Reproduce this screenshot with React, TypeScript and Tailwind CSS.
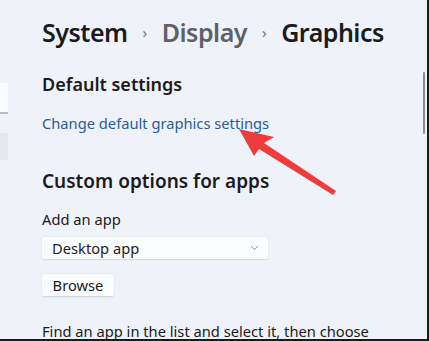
import React from "react";

export default function App() {
  const font = { fontFamily: '"Noto Sans", "Open Sans", sans-serif' };
  return (
    <div
      className="relative w-[429px] h-[341px] overflow-hidden bg-[#eff3f9] border-r-2 border-b-2 border-[#1a1a1a] flex"
      style={font}
    >
      {/* left sidebar sliver */}
      <div className="w-[10px] shrink-0 flex flex-col pt-[83px]">
        <div className="h-[31px] w-[8px] bg-[#f9fbfe] border-b-2 border-[#b9bcc2]" />
        <div className="h-[27px] w-[8px] bg-[#e5e8ee] mt-[19px]" />
      </div>

      {/* content */}
      <div className="flex flex-col pl-[32px] pt-[14px]">
        <div className="flex items-center text-[25px] font-semibold leading-[36px] tracking-[-0.5px]">
          <span className="text-[#1b1b1b]">System</span>
          <span className="text-[#6b6f75] text-[15px] font-normal mx-[15px]">›</span>
          <span className="text-[#5e6167]">Display</span>
          <span className="text-[#6b6f75] text-[15px] font-normal mx-[15px]">›</span>
          <span className="text-[#1b1b1b]">Graphics</span>
        </div>

        <div className="mt-[22px] text-[18px] font-semibold leading-[24px] text-[#1b1b1b]">
          Default settings
        </div>

        <div className="mt-[17px] text-[14.7px] leading-[20px] text-[#2a5d93]">
          Change default graphics settings
        </div>

        <div className="mt-[34px] text-[19px] font-semibold leading-[28px] text-[#1b1b1b]">
          Custom options for apps
        </div>

        <div className="mt-[14px] text-[14.7px] leading-[20px] text-[#1b1b1b]">Add an app</div>

        <div className="mt-[8px] w-[226px] h-[29px] bg-[#fbfcfe] rounded-[3px] border-b border-[#d7dae0] shadow-[0_0_0_1px_#e8ebf0] flex items-center justify-between pl-[10px] pr-[9px]">
          <span className="text-[14.7px] text-[#1b1b1b]">Desktop app</span>
          <svg width="9" height="6" viewBox="0 0 9 6" fill="none">
            <path d="M1 1.2 L4.5 4.6 L8 1.2" stroke="#8a8d93" strokeWidth="1" />
          </svg>
        </div>

        <div className="mt-[14px] w-[72px] h-[28px] bg-[#fbfcfe] rounded-[3px] border-b border-[#d7dae0] shadow-[0_0_0_1px_#e8ebf0] flex items-center justify-center">
          <span className="text-[14.7px] text-[#1b1b1b]">Browse</span>
        </div>

        <div className="mt-[24px] text-[14.7px] leading-[20px] text-[#1b1b1b] whitespace-nowrap">
          Find an app in the list and select it, then choose
        </div>
      </div>

      {/* scrollbar */}
      <div className="absolute left-[423px] top-[72px] w-[2px] h-[62px] bg-[#8b8b8b] rounded-full" />

      {/* red annotation arrow */}
      <svg className="absolute left-0 top-0" width="429" height="341" viewBox="0 0 429 341">
        <path
          d="M239 129 L274 137 L264 143 L336 191 L333 195 L259 149 L254 156 Z"
          fill="#ee3b3b"
        />
      </svg>
    </div>
  );
}
